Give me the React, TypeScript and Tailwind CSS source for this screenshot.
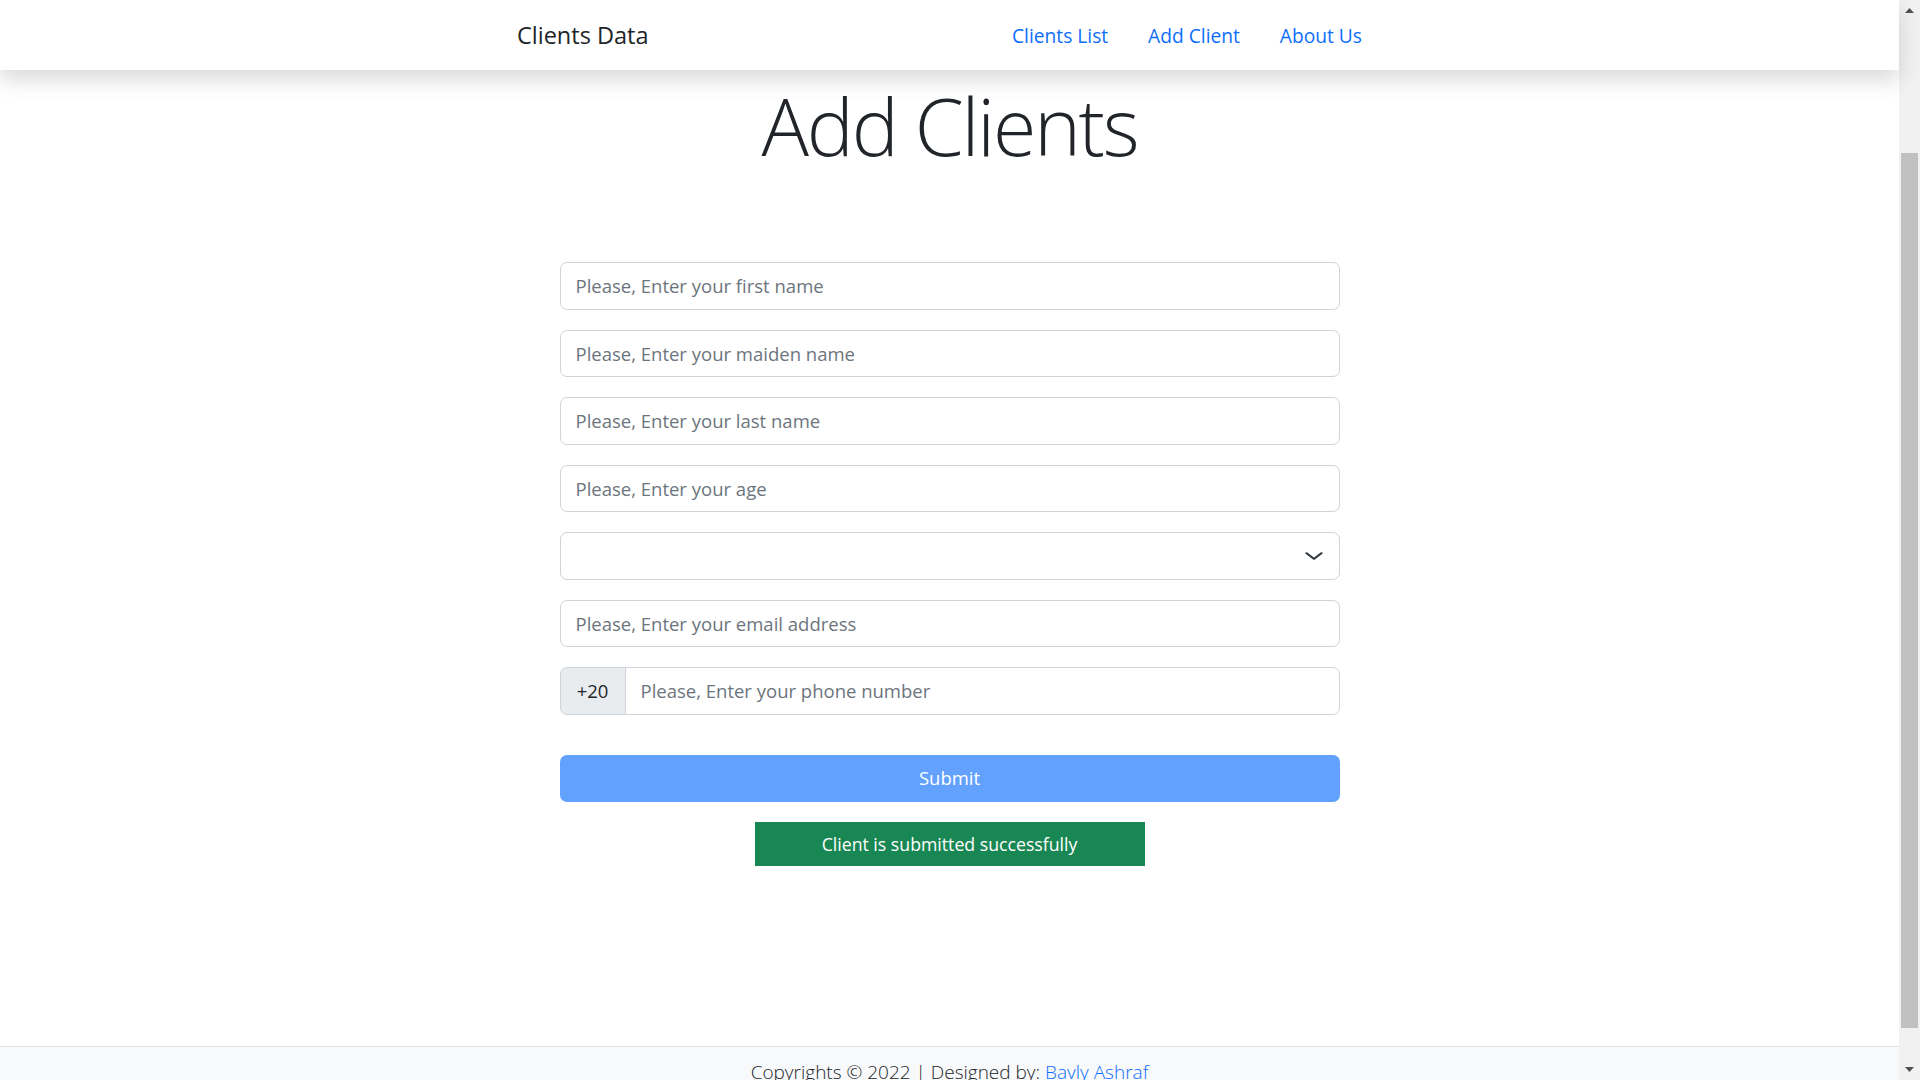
import React from "react";

const inputCls =
  "block w-full h-[47.5px] rounded-[7px] border border-[#ced4da] bg-white px-[15px] text-[18.5px] text-[#212529] placeholder:text-[#6c757d] outline-none";

export default function App() {
  return (
    <div className="flex h-[1080px] w-full overflow-hidden bg-white font-['Open_Sans',_sans-serif] text-[#212529]">
      <div className="relative flex h-full w-[1899px] flex-col">
        <nav className="relative z-10 h-[70px] shrink-0 bg-white shadow-[0_10px_20px_rgba(0,0,0,0.15)]">
          <div className="mx-auto flex h-full w-[895px] items-center justify-between px-[15px] pt-[2px]">
            <a className="text-[23.5px] text-[#212529]">Clients Data</a>
            <div className="flex items-center">
              <a className="px-[20px] text-[19.2px] text-[#0d6efd]">Clients List</a>
              <a className="px-[20px] text-[19.2px] text-[#0d6efd]">Add Client</a>
              <a className="pl-[20px] pr-[20px] text-[19.2px] text-[#0d6efd]">About Us</a>
            </div>
          </div>
        </nav>

        <main className="flex flex-1 flex-col items-center">
          <h1 className="mt-[8px] text-[79px] font-light leading-[96px] tracking-[-2.2px] text-[#212529]">
            Add Clients
          </h1>

          <form className="mt-[88px] flex w-[780px] flex-col gap-[20px]">
            <input className={inputCls} placeholder="Please, Enter your first name" />
            <input className={inputCls} placeholder="Please, Enter your maiden name" />
            <input className={inputCls} placeholder="Please, Enter your last name" />
            <input className={inputCls} placeholder="Please, Enter your age" />
            <div className="relative h-[47.5px] w-full rounded-[7px] border border-[#ced4da] bg-white">
              <svg
                className="absolute right-[15px] top-1/2 h-[15px] w-[20px] -translate-y-1/2"
                viewBox="0 0 16 16"
                fill="none"
                preserveAspectRatio="none"
              >
                <path
                  d="M2 5l6 6 6-6"
                  stroke="#343a40"
                  strokeWidth="2"
                  strokeLinecap="round"
                  strokeLinejoin="round"
                />
              </svg>
            </div>
            <input className={inputCls} placeholder="Please, Enter your email address" />
            <div className="flex h-[47.5px] w-full">
              <span className="flex w-[66px] shrink-0 items-center justify-center rounded-l-[7px] border border-[#ced4da] bg-[#e9ecef] text-[18.5px] text-[#212529]">
                +20
              </span>
              <input
                className="-ml-px block h-full w-full rounded-r-[7px] border border-[#ced4da] bg-white px-[15px] text-[18.5px] text-[#212529] placeholder:text-[#6c757d] outline-none"
                placeholder="Please, Enter your phone number"
              />
            </div>
            <button
              type="button"
              className="mt-[20px] h-[47.5px] w-full rounded-[7px] bg-[#62a1fe] text-[18.5px] text-white"
            >
              Submit
            </button>
          </form>

          <div className="mt-[20px] flex h-[44px] w-[390px] items-center justify-center bg-[#198754] text-[17.7px] text-white">
            Client is submitted successfully
          </div>
        </main>

        <footer className="h-[34px] shrink-0 border-t border-[#dee2e6] bg-[#f8f9fa]">
          <p className="mt-[13px] text-center text-[19px] font-light leading-[24px] text-[#212529]">
            Copyrights © 2022 | Designed by: <a className="text-[#0d6efd]">Bavly Ashraf</a>
          </p>
        </footer>
      </div>

      <div className="relative flex h-full w-[21px] shrink-0 flex-col bg-[#f1f1f1]">
        <div className="flex h-[21px] items-center justify-center">
          <svg width="9" height="5" viewBox="0 0 9 5">
            <path d="M4.5 0L9 5H0z" fill="#505050" />
          </svg>
        </div>
        <div className="mt-[132px] ml-[2px] h-[875px] w-[17px] bg-[#c1c1c1]" />
        <div className="mt-auto flex h-[21px] items-center justify-center">
          <svg width="9" height="5" viewBox="0 0 9 5">
            <path d="M0 0H9L4.5 5z" fill="#505050" />
          </svg>
        </div>
      </div>
    </div>
  );
}
